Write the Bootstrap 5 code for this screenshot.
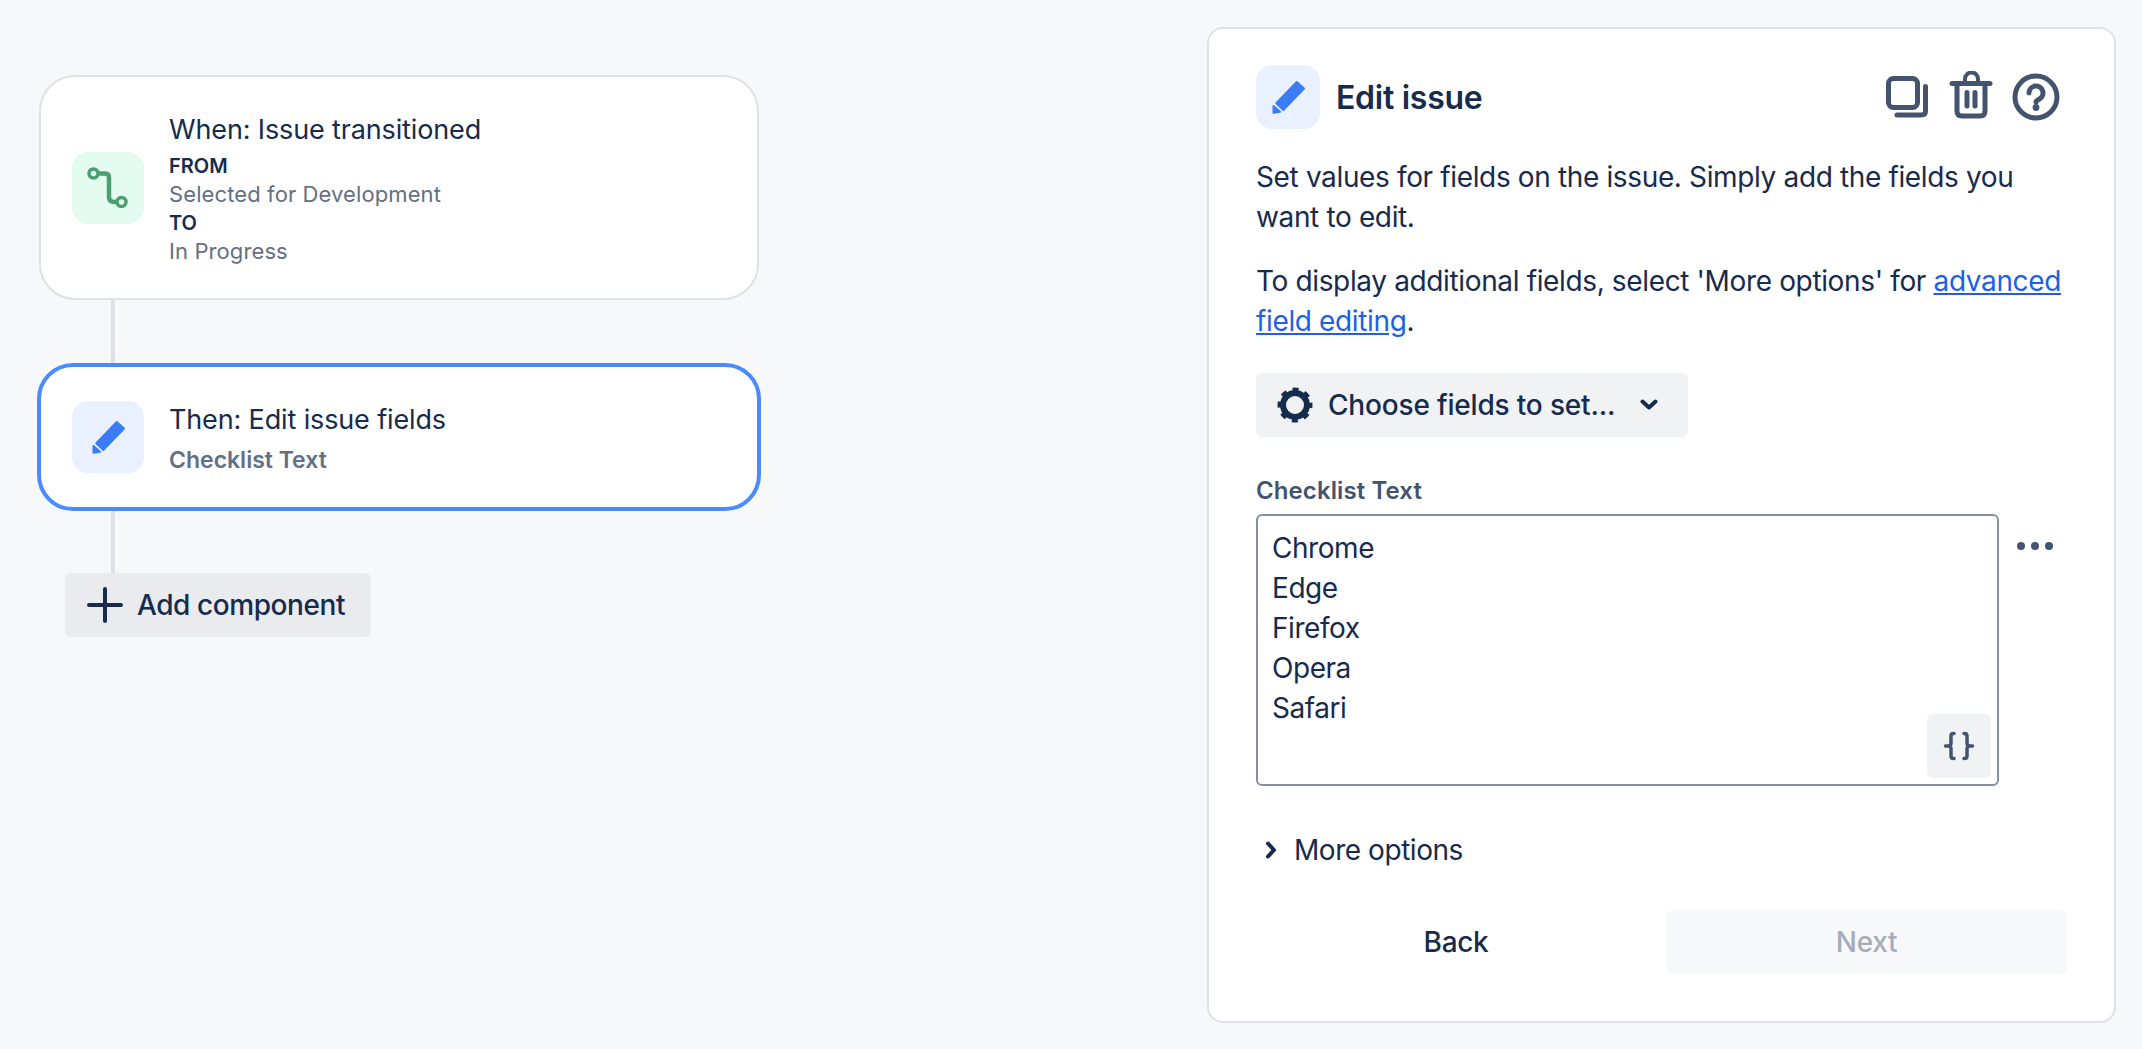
<!DOCTYPE html>
<html lang="en">
<head>
<meta charset="utf-8">
<title>Edit issue</title>
<link rel="stylesheet" href="https://cdn.jsdelivr.net/npm/bootstrap@5.3.0/dist/css/bootstrap.min.css">
<style>
html,body{height:100%}
body{background:#f7f8f9;color:#172b4d;font-family:Inter,"Liberation Sans",sans-serif;font-size:28px;line-height:40px;letter-spacing:-.36px;overflow:hidden}
.canvas-col{width:720px;margin-left:39px;padding-top:75px}
.rule-card{background:#fff;border:2px solid #dfe1e6;border-radius:36px;padding:0 31px;gap:25px;height:225px}
.rule-card.selected{border:4px solid #4c8bff;height:148px;margin:0 -2px;padding:0 31px}
.tile{width:72px;height:72px;border-radius:16px;flex:none}
.tile-green{background:#e3fcef}
.tile-blue{background:#e9f1fe}
.tile-sm{width:64px;height:64px}
.linker{width:4px;background:#dfe1e6;margin-left:72px}
.link-a{height:63px}
.link-b{height:62px}
.rule-title{font-size:27px;letter-spacing:-.14px}
.tiny-head{font-size:20px;line-height:28.4px;font-weight:600;letter-spacing:0}
.tiny-first{margin-top:2px}
.tiny-text{font-size:22px;line-height:28.4px;color:#626f86;letter-spacing:.1px}
.sub-bold{font-size:23px;line-height:32px;font-weight:600;color:#626f86;margin-top:4px;letter-spacing:0}
.then-text{margin-top:2px}
.ads-btn{font-size:28px;line-height:40px;color:#172b4d;font-weight:500;letter-spacing:-.3px;border:0;border-radius:6px;height:64px;padding:0;--bs-btn-hover-color:#172b4d;--bs-btn-active-color:#172b4d}
.add-btn{background:#e9ebee;width:306px;margin-left:26px;padding-left:22px;gap:14px;letter-spacing:-.42px}
.panel{width:909px;height:996px;margin:27px 26px 0 0;background:#fff;border:2px solid #dfe1e6;border-radius:16px;padding:36px 47px 0}
.panel-title{font-size:32px;line-height:40px;font-weight:600;margin:2px 0 0;letter-spacing:-.27px}
.head-tools{gap:17px;margin-right:7px}
.panel p{margin:0 0 24px}
.panel a{color:#1d61e3}
.intro{margin-top:28px}
.choose-btn{background:#f1f2f4;width:432px;margin-top:32px;padding-left:21px;gap:15px;letter-spacing:-.18px}
.choose-btn:hover,.add-btn:hover{background:#e9ebee}
.chev-down{margin-right:30px}
.field-label{font-size:24px;line-height:32px;font-weight:600;color:#44546f;margin:38px 0 7px;display:block;letter-spacing:.1px}
.field-row{gap:12px}
.field-wrap{width:743px}
.field-input{width:100%;height:272px;border:2px solid #8590a2;border-radius:6px;padding:12px 14px 4px;font-size:28px;line-height:40px;color:#172b4d;font-family:inherit;letter-spacing:-.45px;resize:none;display:block;box-shadow:none}
.var-btn{position:absolute;right:8px;bottom:8px;width:64px;height:64px;background:#f1f2f4;border:0;border-radius:6px;padding:0}
.dots{gap:6px;padding:28px 0 0 6px}
.dots span{width:8px;height:8px;border-radius:50%;background:#44546f;display:block}
.more-row{margin-top:44px;padding-left:8px;gap:16px;letter-spacing:-.45px}
.action-row{margin-top:40px;gap:10px}
.action-btn{width:400px;font-weight:500}
.next-btn{background:#f7f8f9;color:#a5adba;font-weight:500;width:401px}
.next-btn:disabled{background:#f7f8f9;color:#a5adba;opacity:1}
</style>
</head>
<body>
<div class="d-flex justify-content-between h-100">
  <div class="canvas-col">
    <div class="rule-card d-flex align-items-center">
      <div class="tile tile-green d-flex align-items-center justify-content-center">
        <svg width="72" height="72" viewBox="0 0 72 72" fill="none" stroke="#4c9f70"><path d="M26 21.500H33q4 0 4 4V45q0 5 5 5H45" stroke-width="4.500"/><circle cx="21.500" cy="21.500" r="4.500" stroke-width="3.500"/><circle cx="49.500" cy="50" r="4.500" stroke-width="3.500"/></svg>
      </div>
      <div>
        <div class="rule-title">When: Issue transitioned</div>
        <div class="tiny-head tiny-first">FROM</div>
        <div class="tiny-text">Selected for Development</div>
        <div class="tiny-head">TO</div>
        <div class="tiny-text">In Progress</div>
      </div>
    </div>
    <div class="linker link-a"></div>
    <div class="rule-card selected d-flex align-items-center">
      <div class="tile tile-blue d-flex align-items-center justify-content-center">
        <svg width="64" height="64" viewBox="0 0 64 64" fill="#3b7cf7" stroke="#3b7cf7" stroke-width="2" stroke-linejoin="round"><path d="M40.700 17 48 23.500 27.300 45 20.300 38.300Z"/><path d="M17.500 41 24 46.800 17.500 47.800Z"/></svg>
      </div>
      <div class="then-text">
        <div class="rule-title">Then: Edit issue fields</div>
        <div class="sub-bold">Checklist Text</div>
      </div>
    </div>
    <div class="linker link-b"></div>
    <button type="button" class="btn ads-btn add-btn d-flex align-items-center">
      <svg width="36" height="36" viewBox="0 0 36 36" fill="none" stroke="#172b4d" stroke-width="4" stroke-linecap="round"><path d="M18 2V34M2 18H34"/></svg>
      <span>Add component</span>
    </button>
  </div>

  <div class="panel">
    <div class="d-flex align-items-center">
      <div class="tile tile-sm tile-blue d-flex align-items-center justify-content-center">
        <svg width="64" height="64" viewBox="0 0 64 64" fill="#3b7cf7" stroke="#3b7cf7" stroke-width="2" stroke-linejoin="round"><path d="M40.700 17 48 23.500 27.300 45 20.300 38.300Z"/><path d="M17.500 41 24 46.800 17.500 47.800Z"/></svg>
      </div>
      <h1 class="panel-title ms-3 flex-grow-1">Edit issue</h1>
      <div class="head-tools d-flex align-items-center">
        <svg width="48" height="48" viewBox="0 0 48 48" fill="none" stroke="#44546f" stroke-linecap="round"><rect x="6.500" y="5.500" width="29" height="29" rx="5" stroke-width="5"/><path d="M43.500 13.500V38q0 4-4 4H15" stroke-width="5"/></svg>
        <svg width="48" height="52" viewBox="0 -2 48 52" fill="none" stroke="#44546f" stroke-width="5" stroke-linecap="round" stroke-linejoin="round"><path d="M18 10V6a6.500 6.500 0 0 1 13 0V10" stroke-width="4"/><path d="M5 10.500H43"/><path d="M10 11V38q0 5 5 5H33q5 0 5-5V11"/><path d="M20 19.500V33M28 19.500V33"/></svg>
        <svg width="48" height="48" viewBox="0 0 48 48" fill="none" stroke="#44546f" stroke-width="5" stroke-linecap="round"><circle cx="24" cy="24" r="21"/><path d="M17 20a7 7 0 1 1 10.500 6q-3.500 1.700-3.500 3"/><circle cx="24" cy="34.500" r="3.400" fill="#44546f" stroke="none"/></svg>
      </div>
    </div>
    <div class="intro">
      <p>Set values for fields on the issue. Simply add the fields you want to edit.</p>
      <p>To display additional fields, select 'More options' for <a href="#">advanced field editing</a>.</p>
    </div>
    <button type="button" class="btn ads-btn choose-btn d-flex align-items-center">
      <svg width="36" height="36" viewBox="0 0 36 36" fill="none" stroke="#172b4d"><circle cx="18" cy="18" r="12" stroke-width="6"/><circle cx="18" cy="18" r="15" stroke-width="5" stroke-dasharray="5.800 6" stroke-dashoffset="2.900"/></svg>
      <span class="flex-grow-1 text-start">Choose fields to set...</span>
      <svg class="chev-down" width="18" height="12" viewBox="0 0 18 12" fill="none" stroke="#172b4d" stroke-width="4" stroke-linecap="round" stroke-linejoin="round"><path d="M2.500 2.500 9 8.500 15.500 2.500"/></svg>
    </button>
    <label class="field-label" for="checklist">Checklist Text</label>
    <div class="field-row d-flex">
      <div class="field-wrap position-relative">
        <textarea class="form-control field-input" id="checklist" rows="5">Chrome
Edge
Firefox
Opera
Safari</textarea>
        <button type="button" class="var-btn d-flex align-items-center justify-content-center">
          <svg width="40" height="32" viewBox="0 0 40 32" fill="none" stroke="#44546f" stroke-width="3.500" stroke-linecap="round" stroke-linejoin="round"><path d="M15 3.500H14.500q-2.500 0-2.500 2.500V13q0 3-3 3H6.500M9 16q3 0 3 3V26q0 2.500 2.500 2.500H15"/><path d="M25 3.500H25.500q2.500 0 2.500 2.500V13q0 3 3 3H33.500M31 16q-3 0-3 3V26q0 2.500-2.500 2.500H25"/></svg>
        </button>
      </div>
      <div class="dots d-flex"><span></span><span></span><span></span></div>
    </div>
    <div class="more-row d-flex align-items-center">
      <svg width="14" height="20" viewBox="0 0 14 20" fill="none" stroke="#172b4d" stroke-width="4" stroke-linecap="round" stroke-linejoin="round"><path d="M4 3.500 10 10 4 16.500"/></svg>
      <span>More options</span>
    </div>
    <div class="action-row d-flex">
      <button type="button" class="btn ads-btn action-btn">Back</button>
      <button type="button" class="btn ads-btn action-btn next-btn" disabled>Next</button>
    </div>
  </div>
</div>
<script src="https://cdn.jsdelivr.net/npm/bootstrap@5.3.0/dist/js/bootstrap.bundle.min.js"></script>
</body>
</html>
